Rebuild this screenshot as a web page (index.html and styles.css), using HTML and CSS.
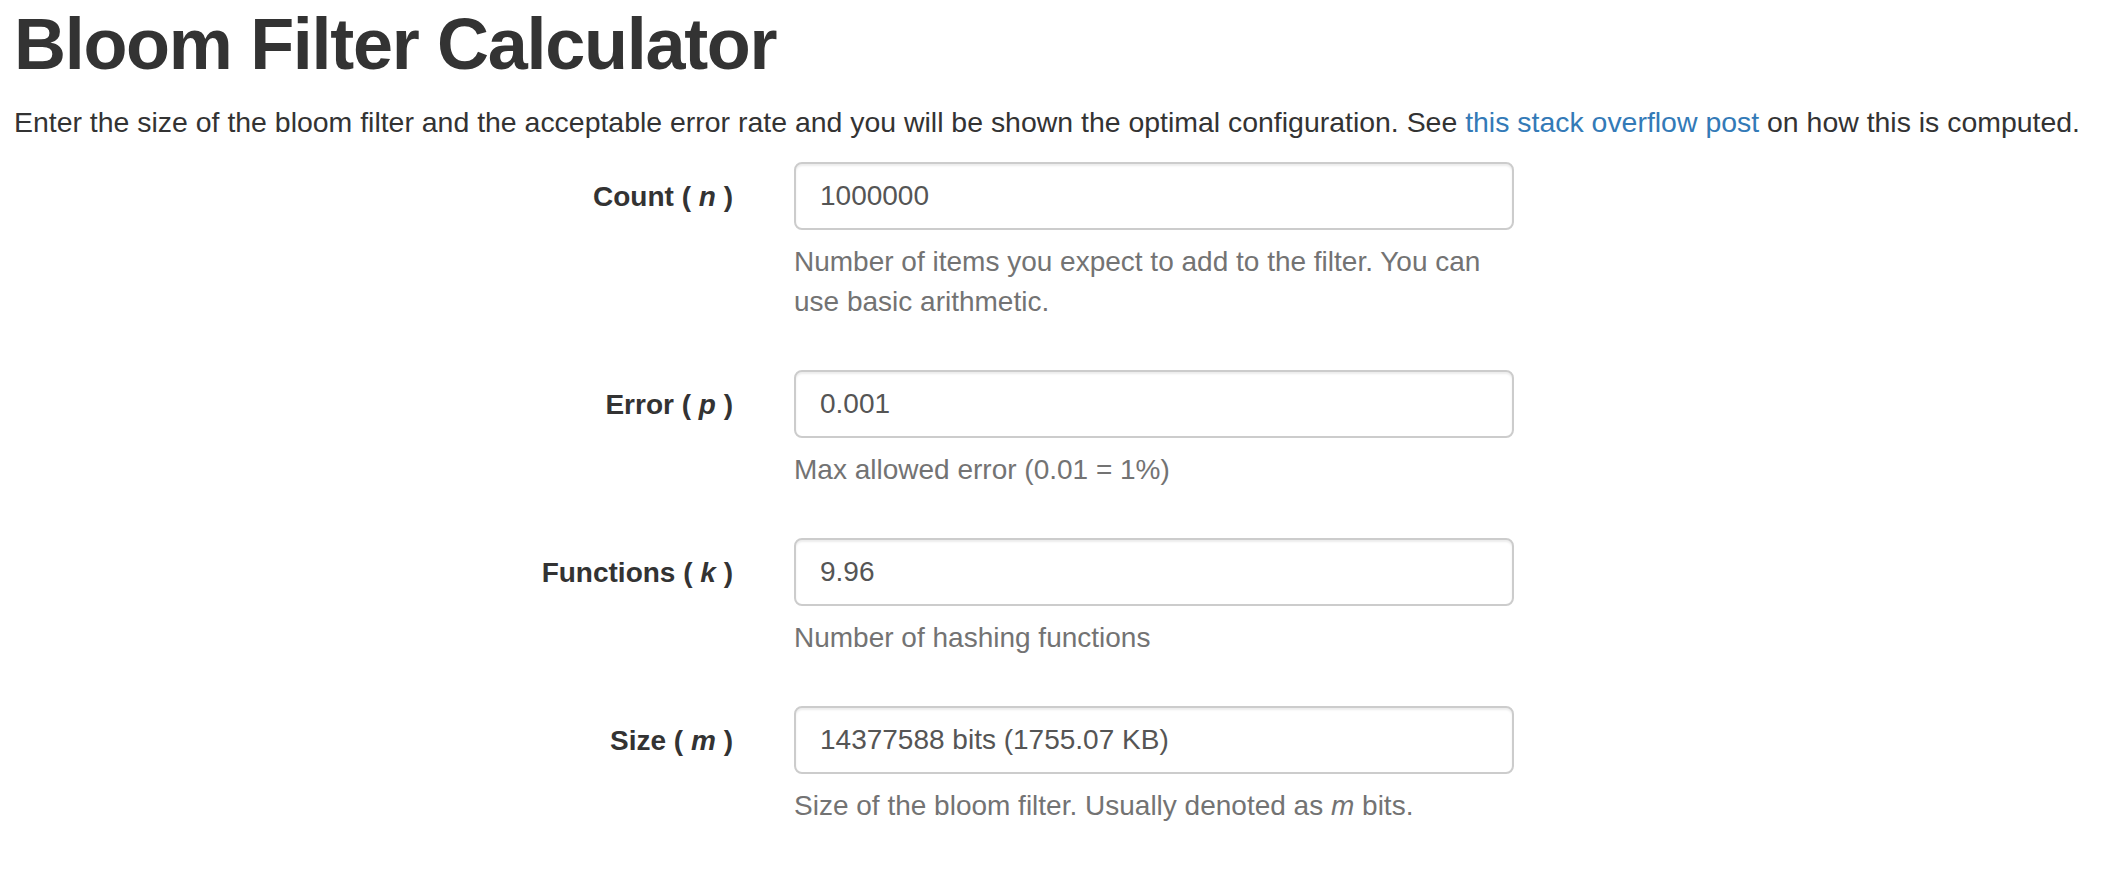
FILE: index.html
```html
<!DOCTYPE html>
<html lang="en">
<head>
<meta charset="utf-8">
<title>Bloom Filter Calculator</title>
<link rel="stylesheet" href="styles.css">
</head>
<body>
<div class="page">
  <h1 class="title">Bloom Filter Calculator</h1>
  <p class="intro">Enter the size of the bloom filter and the acceptable error rate and you will be shown the optimal configuration. See <a class="link" href="#">this stack overflow post</a> on how this is computed.</p>
  <form class="form">
    <div class="group">
      <label class="label" for="n">Count ( <i>n</i> )</label>
      <div class="field">
        <input class="input" id="n" type="text" value="1000000">
        <p class="help">Number of items you expect to add to the filter. You can use basic arithmetic.</p>
      </div>
    </div>
    <div class="group">
      <label class="label" for="p">Error ( <i>p</i> )</label>
      <div class="field">
        <input class="input" id="p" type="text" value="0.001">
        <p class="help">Max allowed error (0.01 = 1%)</p>
      </div>
    </div>
    <div class="group">
      <label class="label" for="k">Functions ( <i>k</i> )</label>
      <div class="field">
        <input class="input" id="k" type="text" value="9.96">
        <p class="help">Number of hashing functions</p>
      </div>
    </div>
    <div class="group">
      <label class="label" for="m">Size ( <i>m</i> )</label>
      <div class="field">
        <input class="input" id="m" type="text" value="14377588 bits (1755.07 KB)">
        <p class="help">Size of the bloom filter. Usually denoted as <i>m</i> bits.</p>
      </div>
    </div>
  </form>
</div>
</body>
</html>
```

FILE: styles.css
```css
html, body {
  margin: 0;
  padding: 0;
  background: #fff;
}
body {
  font-family: "Liberation Sans", Arial, Helvetica, sans-serif;
  font-size: 28px;
  line-height: 40px;
  color: #333;
}
.page {
  padding-left: 14px;
}
.title {
  font-size: 72px;
  line-height: 79px;
  font-weight: bold;
  letter-spacing: -1.3px;
  margin: 5px 0 18px 0;
  color: #333;
}
.intro {
  margin: 0 0 20px 0;
  font-size: 28.45px;
}
.link {
  color: #337ab7;
  text-decoration: none;
}
.form {
  margin: 0;
}
.group {
  display: grid;
  grid-template-columns: 750px 720px;
  column-gap: 30px;
  margin-bottom: 32px;
}
.label {
  text-align: right;
  font-weight: bold;
  padding-top: 15px;
  padding-right: 31px;
  line-height: 40px;
}
.field {
  display: flex;
  flex-direction: column;
}
.input {
  box-sizing: border-box;
  width: 720px;
  height: 68px;
  padding: 12px 24px;
  font-family: "Liberation Sans", Arial, Helvetica, sans-serif;
  font-size: 28px;
  color: #555;
  background: #fff;
  border: 2px solid #ccc;
  border-radius: 8px;
  box-shadow: inset 0 2px 2px rgba(0,0,0,.075);
  outline: none;
  margin: 0;
}
.help {
  margin: 12px 0 16px 0;
  font-size: 28px;
  line-height: 40px;
  color: #737373;
}
```
